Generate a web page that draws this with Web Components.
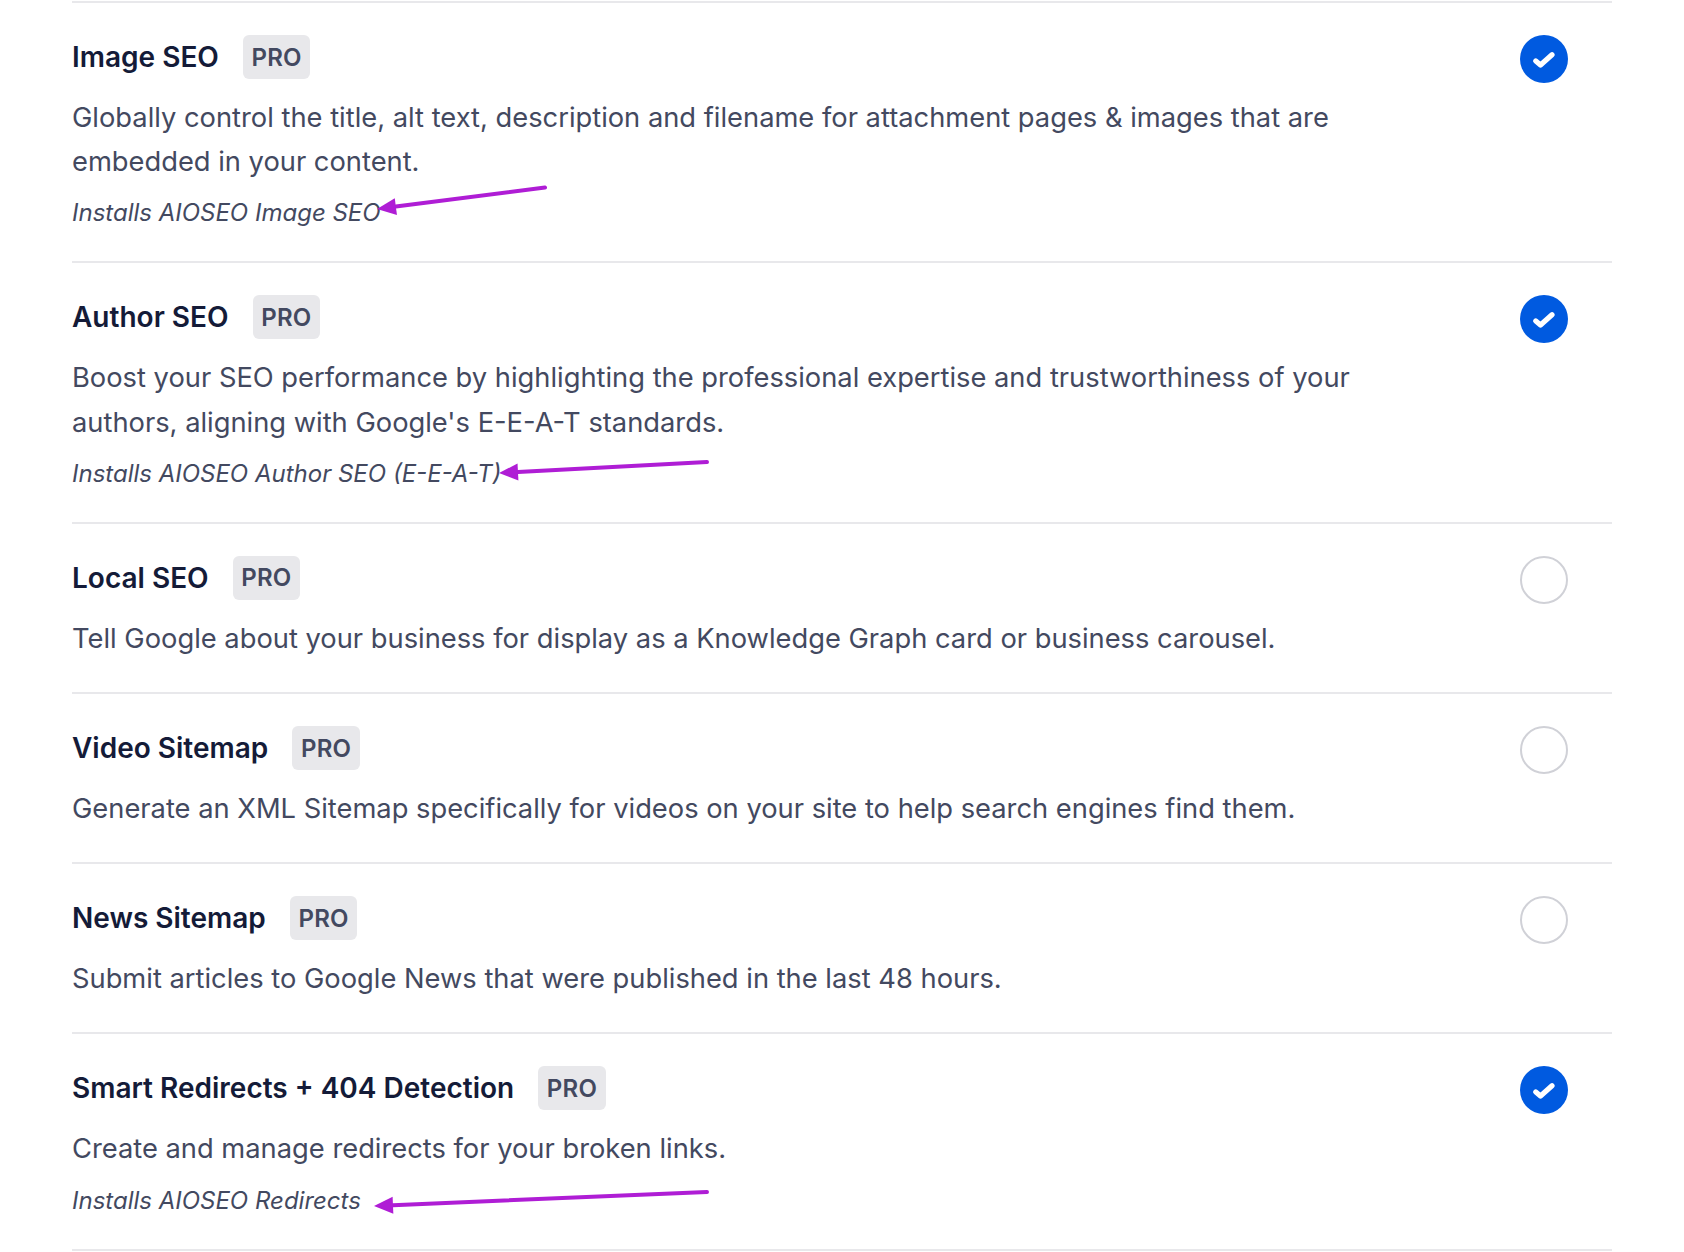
<!DOCTYPE html>
<html>
<head>
<meta charset="utf-8">
<style>
    html, body { margin: 0; background: #fff; }
    body { padding: 1px 72px 0; font-family: Inter, "Liberation Sans", sans-serif; overflow: hidden; }
</style>
</head>
<body>
<feature-list>
    <feature-row name="Image SEO" checked note="Installs AIOSEO Image SEO" arrow="545,187.5 377,209">Globally control the title, alt text, description and filename for attachment pages &amp; images that are embedded in your content.</feature-row>
    <feature-row name="Author SEO" checked note="Installs AIOSEO Author SEO (E-E-A-T)" arrow="707,462 499,473">Boost your SEO performance by highlighting the professional expertise and trustworthiness of your authors, aligning with Google's E-E-A-T standards.</feature-row>
    <feature-row name="Local SEO">Tell Google about your business for display as a Knowledge Graph card or business carousel.</feature-row>
    <feature-row name="Video Sitemap">Generate an XML Sitemap specifically for videos on your site to help search engines find them.</feature-row>
    <feature-row name="News Sitemap">Submit articles to Google News that were published in the last 48 hours.</feature-row>
    <feature-row name="Smart Redirects + 404 Detection" checked note="Installs AIOSEO Redirects" arrow="707,1192 374,1206">Create and manage redirects for your broken links.</feature-row>
</feature-list>

<script>
class FeatureList extends HTMLElement {
    constructor() {
        super();
        const shadow = this.attachShadow({ mode: "open" });
        shadow.innerHTML = `
            <style>
                :host { display: block; position: relative; border-bottom: 2px solid #e8e8eb; }
            </style>
            <slot></slot>
        `;
    }
}

class ProBadge extends HTMLElement {
    constructor() {
        super();
        const shadow = this.attachShadow({ mode: "open" });
        shadow.innerHTML = `
            <style>
                :host {
                    display: inline-flex;
                    align-items: center;
                    height: 44px;
                    padding: 0 8.7px;
                    border-radius: 6px;
                    background: #e8e8eb;
                    color: #434960;
                    font-size: 24px;
                    font-weight: 600;
                    letter-spacing: 0.2px;
                }
            </style>
            <slot></slot>
        `;
    }
}

class CheckCircle extends HTMLElement {
    constructor() {
        super();
        const shadow = this.attachShadow({ mode: "open" });
        shadow.innerHTML = `
            <style>
                :host {
                    display: block;
                    box-sizing: border-box;
                    width: 48px;
                    height: 48px;
                    border-radius: 50%;
                    border: 2px solid #d0d1d7;
                    background: #fff;
                }
                :host([checked]) { border: 0; background: #005ae0; }
                svg { display: none; width: 48px; height: 48px; }
                :host([checked]) svg { display: block; }
            </style>
            <svg viewBox="0 0 48 48"><path d="M15.8 26l4.7 4L32 19.8" fill="none" stroke="#fff" stroke-width="5.2" stroke-linecap="round" stroke-linejoin="round"/></svg>
        `;
    }
}

class FeatureRow extends HTMLElement {
    constructor() {
        super();
        const shadow = this.attachShadow({ mode: "open" });
        shadow.innerHTML = `
            <style>
                :host {
                    display: flex;
                    justify-content: space-between;
                    align-items: flex-start;
                    box-sizing: border-box;
                    padding: 32px 44px 31px 0;
                    border-top: 2px solid #e8e8eb;
                }
                .main { width: 1300px; }
                .head { display: flex; align-items: center; gap: 24px; height: 44px; margin-bottom: 17px; }
                .name { color: #141b38; font-size: 28px; font-weight: 600; }
                .desc { color: #434960; font-size: 27.3px; line-height: 44.2px; }
                .note { margin-top: 11px; color: #434960; font-size: 24px; line-height: 35px; font-style: italic; }
                .note[hidden] { display: none; }
                svg.arrow { position: absolute; left: -72px; top: -1px; overflow: visible; pointer-events: none; }
            </style>
            <div class="main">
                <div class="head"><span class="name"></span><pro-badge>PRO</pro-badge></div>
                <div class="desc"><slot></slot></div>
                <div class="note" hidden></div>
            </div>
            <check-circle></check-circle>
        `;
    }

    connectedCallback() {
        const shadow = this.shadowRoot;
        shadow.querySelector(".name").textContent = this.getAttribute("name");
        if (this.hasAttribute("checked")) {
            shadow.querySelector("check-circle").setAttribute("checked", "");
        }
        if (this.hasAttribute("note")) {
            const note = shadow.querySelector(".note");
            note.hidden = false;
            note.textContent = this.getAttribute("note");
        }
        if (this.hasAttribute("arrow")) {
            this.drawArrow(this.getAttribute("arrow"));
        }
    }

    // arrow="tailX,tailY tipX,tipY" in page coordinates
    drawArrow(value) {
        const [tail, tip] = value.split(" ").map((p) => p.split(",").map(Number));
        const angle = Math.atan2(tip[1] - tail[1], tip[0] - tail[0]);
        const cos = Math.cos(angle);
        const sin = Math.sin(angle);
        const baseX = tip[0] - 19 * cos;
        const baseY = tip[1] - 19 * sin;
        const left = [baseX - 8.5 * sin, baseY + 8.5 * cos];
        const right = [baseX + 8.5 * sin, baseY - 8.5 * cos];
        const ns = "http://www.w3.org/2000/svg";
        const svg = document.createElementNS(ns, "svg");
        svg.setAttribute("class", "arrow");
        svg.setAttribute("width", "1");
        svg.setAttribute("height", "1");
        svg.innerHTML = `
            <line x1="${tail[0]}" y1="${tail[1]}" x2="${baseX}" y2="${baseY}" stroke="#af1dd5" stroke-width="4" stroke-linecap="round"/>
            <polygon points="${tip.join(",")} ${left.join(",")} ${right.join(",")}" fill="#af1dd5"/>
        `;
        this.shadowRoot.appendChild(svg);
    }
}

customElements.define("feature-list", FeatureList);
customElements.define("pro-badge", ProBadge);
customElements.define("check-circle", CheckCircle);
customElements.define("feature-row", FeatureRow);
</script>
</body>
</html>
